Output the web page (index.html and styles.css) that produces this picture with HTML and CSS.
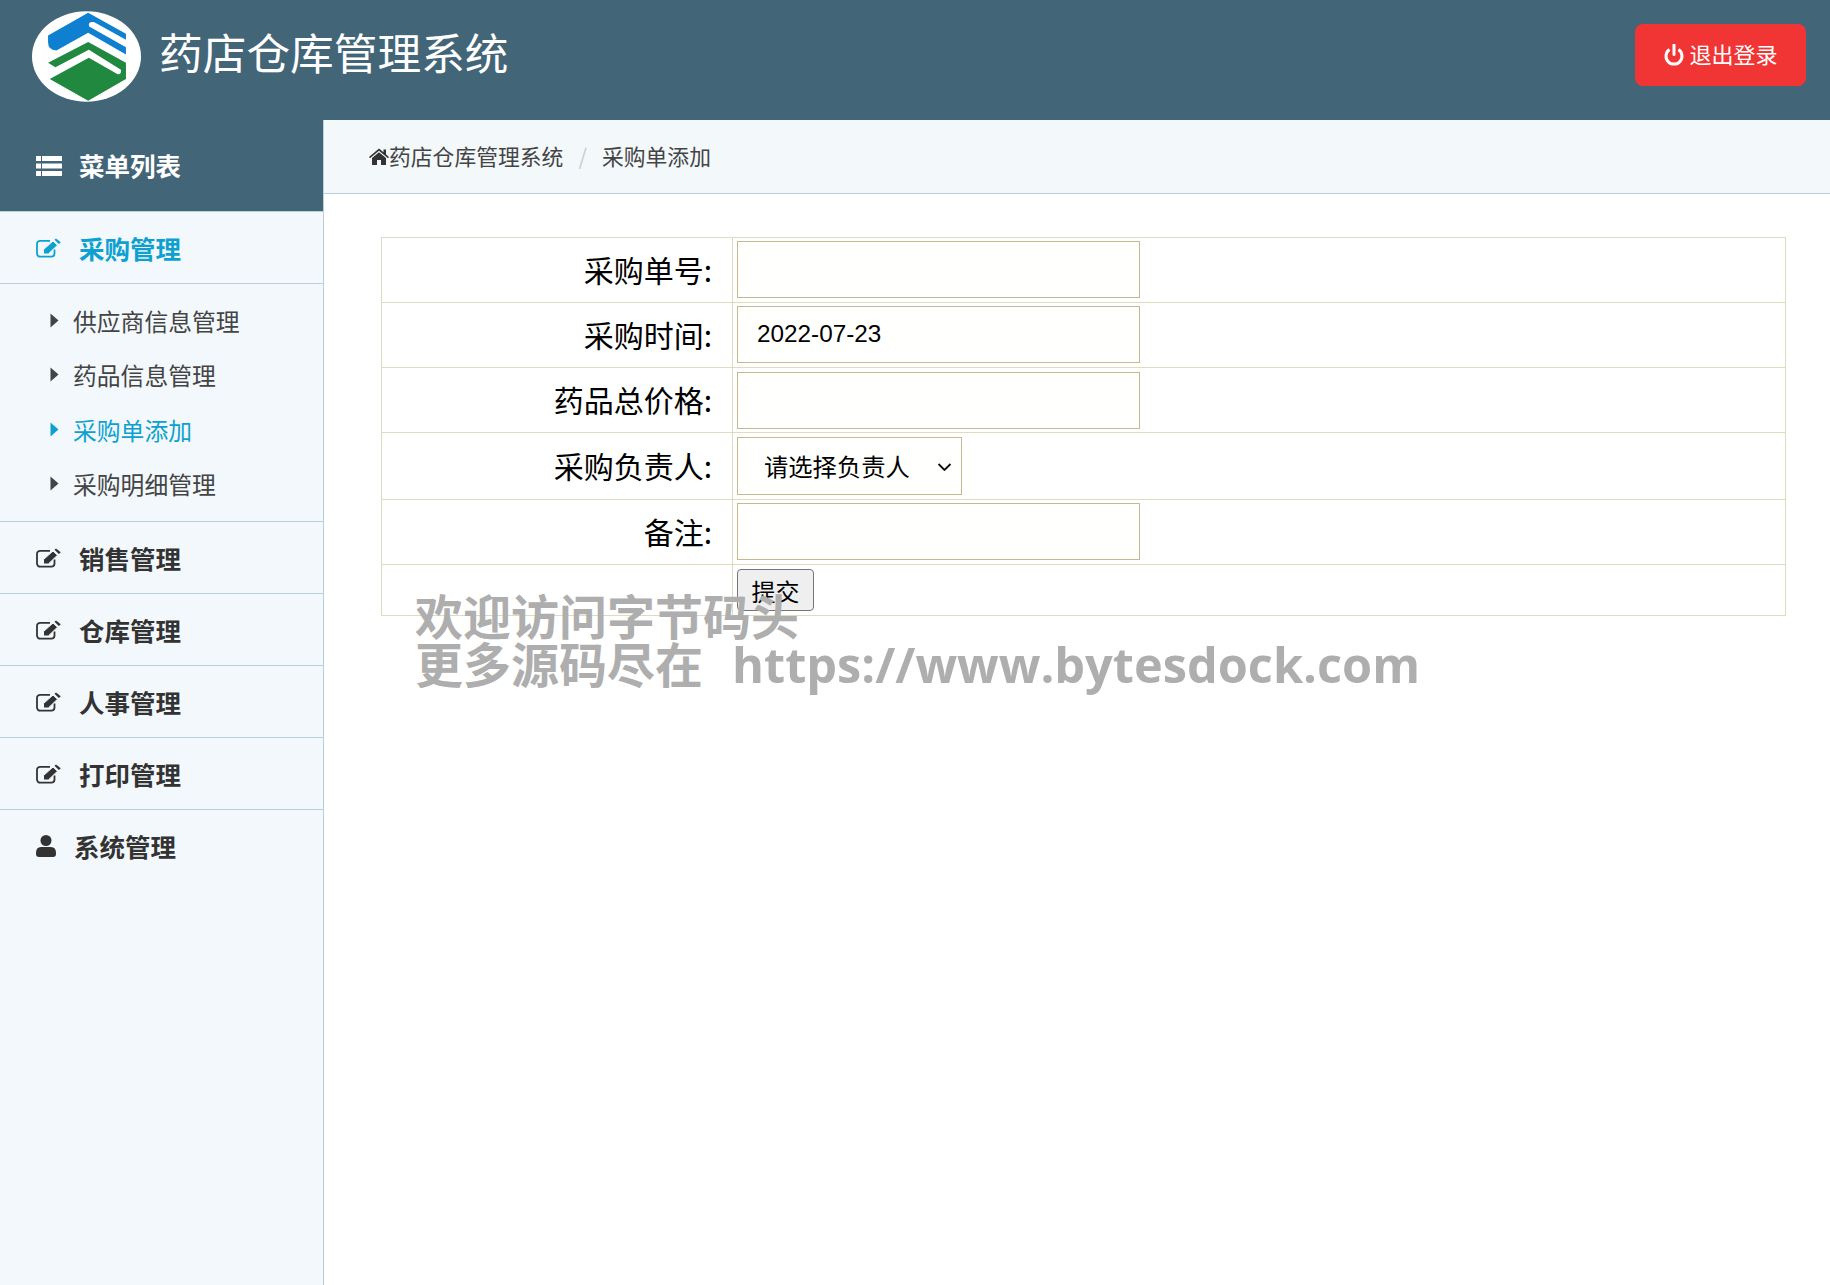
FILE: index.html
```html
<!DOCTYPE html>
<html lang="zh-CN">
<head>
<meta charset="utf-8">
<title>药店仓库管理系统</title>
<link rel="stylesheet" href="styles.css">
</head>
<body>
<svg class="defs" width="0" height="0" aria-hidden="true">
  <symbol id="i-edit" viewBox="0 0 25 20">
    <path d="M18.500 11.500V15.500A3.200 3.200 0 0 1 15.300 18.700H4.200A3.200 3.200 0 0 1 1 15.500V6A3.200 3.200 0 0 1 4.200 2.800H14" fill="none" stroke="currentColor" stroke-width="1.800"/>
    <path d="M7.500 11.500L17 3L21.500 7.200L12.300 16H7.500Z" fill="currentColor" stroke="#f2f8fc" stroke-width="1"/>
    <path d="M18.500 1.800L20 0.400L24.800 4.200L22.800 6Z" fill="currentColor"/>
  </symbol>
  <symbol id="i-caret" viewBox="0 0 9 15">
    <path d="M0.500 0.500L8.500 7.500L0.500 14.500Z" fill="currentColor"/>
  </symbol>
</svg>
<header class="topbar">
  <div class="brand">
    <svg class="logo" viewBox="37 33 326 270" aria-hidden="true">
      <ellipse cx="200" cy="168" rx="163" ry="135" fill="#fff"/>
      <path d="M205 37L318 100V118L222 65Q203 62 208 78L318 140V162L205 97L110 150Q85 150 85 125V105Z" fill="#0f7fd0"/>
      <path d="M205 125L318 187V235L205 300L90 235L207 172L292 220Q305 224 303 208L207 148L107 200L85 187Z" fill="#20883f"/>
    </svg>
    <h1 class="title">药店仓库管理系统</h1>
  </div>
  <button class="logout" type="button">
    <svg class="power" viewBox="0 0 20 22" aria-hidden="true">
      <path d="M5.500 5.500A8 8 0 1 0 14.500 5.500" fill="none" stroke="currentColor" stroke-width="3"/>
      <path d="M10 1V10.500" fill="none" stroke="currentColor" stroke-width="3" stroke-linecap="round"/>
    </svg>
    <span class="logout-text">退出登录</span>
  </button>
</header>
<div class="layout">
  <aside class="sidebar">
    <div class="side-head">
      <svg class="list-icon" viewBox="0 0 26 20" aria-hidden="true">
        <path d="M0 0H5V5H0ZM6 0H26V5H6ZM0 7.500H5V12.500H0ZM6 7.500H26V12.500H6ZM0 15H5V20H0ZM6 15H26V20H6Z" fill="currentColor"/>
      </svg>
      <span>菜单列表</span>
    </div>
    <nav>
      <a class="group active"><svg class="edit"><use href="#i-edit"/></svg><span>采购管理</span></a>
      <ul class="sub">
        <li class="sub-item"><svg class="caret"><use href="#i-caret"/></svg><span>供应商信息管理</span></li>
        <li class="sub-item"><svg class="caret"><use href="#i-caret"/></svg><span>药品信息管理</span></li>
        <li class="sub-item current"><svg class="caret"><use href="#i-caret"/></svg><span>采购单添加</span></li>
        <li class="sub-item"><svg class="caret"><use href="#i-caret"/></svg><span>采购明细管理</span></li>
      </ul>
      <a class="group"><svg class="edit"><use href="#i-edit"/></svg><span>销售管理</span></a>
      <a class="group"><svg class="edit"><use href="#i-edit"/></svg><span>仓库管理</span></a>
      <a class="group"><svg class="edit"><use href="#i-edit"/></svg><span>人事管理</span></a>
      <a class="group"><svg class="edit"><use href="#i-edit"/></svg><span>打印管理</span></a>
      <a class="group plain">
        <svg class="user" viewBox="0 0 20 22" aria-hidden="true">
          <circle cx="10" cy="5.500" r="5.500" fill="currentColor"/>
          <path d="M0 18Q0 12 5 12H15Q20 12 20 18V19Q20 22 17 22H3Q0 22 0 19Z" fill="currentColor"/>
        </svg>
        <span>系统管理</span>
      </a>
    </nav>
  </aside>
  <main class="main">
    <div class="crumbs">
      <svg class="home" viewBox="0 0 20 17" aria-hidden="true">
        <path d="M10 0.500L14.500 4.300V1.500H17V6.500L20 9L19 10.200L10 2.800L1 10.200L0 9Z" fill="currentColor"/>
        <path d="M10 4.300L17 10V17H12V12H8V17H3V10Z" fill="currentColor"/>
      </svg>
      <span>药店仓库管理系统</span>
      <span class="sep">/</span>
      <span>采购单添加</span>
    </div>
    <div class="content">
      <table class="form">
        <tr class="row"><th>采购单号:</th><td><input class="field" type="text"></td></tr>
        <tr class="row"><th>采购时间:</th><td><input class="field" type="text" value="2022-07-23"></td></tr>
        <tr class="row"><th>药品总价格:</th><td><input class="field low" type="text"></td></tr>
        <tr class="row tall"><th>采购负责人:</th><td>
          <div class="picker-wrap">
            <select class="picker"><option>请选择负责人</option></select>
            <svg class="chevron" viewBox="0 0 14 8" aria-hidden="true">
              <path d="M1 1L7 7L13 1" fill="none" stroke="currentColor" stroke-width="1.800"/>
            </svg>
          </div>
        </td></tr>
        <tr class="row"><th>备注:</th><td><input class="field" type="text"></td></tr>
        <tr class="row short"><th></th><td><button class="submit" type="button">提交</button></td></tr>
      </table>
      <div class="watermark">欢迎访问字节码头<br>更多源码尽在<span class="wm-url">https://www.bytesdock.com</span></div>
    </div>
  </main>
</div>
</body>
</html>
```
FILE: styles.css
```css
* { box-sizing: border-box; }
html, body { height: 100%; }
body {
  margin: 0;
  display: flex;
  flex-direction: column;
  font-family: "Noto Sans CJK SC", "Liberation Sans", sans-serif;
  color: #333;
  background: #fff;
  overflow: hidden;
}
.defs { position: absolute; }

.topbar {
  flex: none;
  height: 120px;
  background: #436578;
  display: flex;
  align-items: flex-start;
  justify-content: space-between;
  padding: 11px 24px 0 32px;
}
.brand { display: flex; align-items: center; gap: 18px; }
.logo { width: 109px; height: 91px; display: block; }
.title {
  margin: 0 0 11px;
  font-size: 43.700px;
  line-height: 72px;
  font-weight: 400;
  color: #fff;
}
.logout {
  margin-top: 13px;
  width: 171px;
  height: 62px;
  border: 0;
  border-radius: 8px;
  background: #f13434;
  color: #fff;
  font: 400 22px/1 "Noto Sans CJK SC", sans-serif;
  display: flex;
  align-items: center;
  justify-content: center;
  gap: 5px;
  padding: 0 0 0 1px;
}
.power { width: 20px; height: 22px; }
.logout-text { margin-top: -4px; }

.layout { flex: 1; display: flex; min-height: 0; }

.sidebar {
  flex: none;
  width: 324px;
  background: #f2f8fc;
  border-right: 1px solid #b9cfd9;
}
.side-head {
  height: 92px;
  background: #436578;
  border-bottom: 1px solid #b9cfd9;
  color: #fff;
  font-size: 25.500px;
  font-weight: 700;
  display: flex;
  align-items: center;
  gap: 17px;
  padding: 0 0 3px 36px;
}
.list-icon { width: 26px; height: 20px; margin-top: 3px; }

.group {
  height: 72px;
  display: flex;
  align-items: center;
  gap: 18px;
  padding: 0 0 1px 36px;
  border-bottom: 1px solid #b9cfd9;
  font-size: 25.500px;
  font-weight: 700;
  color: #333;
}
.group.plain { border-bottom: 0; gap: 18px; }
.group.active { color: #0ea1cf; }
.edit { width: 25px; height: 20px; flex: none; margin-top: 1px; }
.user { width: 20px; height: 22px; flex: none; margin-top: 1px; }

.sub {
  list-style: none;
  margin: 0;
  padding: 9px 0 10px;
  height: 238px;
  border-bottom: 1px solid #b9cfd9;
}
.sub-item {
  height: 54.500px;
  display: flex;
  align-items: center;
  gap: 14px;
  padding-left: 50px;
  font-size: 23.800px;
  color: #444;
}
.sub-item.current { color: #0ea1cf; }
.caret { width: 9px; height: 15px; flex: none; }

.main { flex: 1; min-width: 0; display: flex; flex-direction: column; }
.crumbs {
  flex: none;
  height: 74px;
  background: #f3f8fb;
  border-bottom: 1px solid #b9cfd9;
  display: flex;
  align-items: center;
  padding: 0 0 2px 45px;
  font-size: 21.800px;
  color: #444;
}
.home { width: 20px; height: 17px; color: #333; margin-top: 2px; }
.sep { color: #ccc; margin: 0 15px; }

.content { position: relative; flex: 1; padding: 43px 44px 0 57px; }
.form {
  width: 100%;
  border-collapse: collapse;
  table-layout: fixed;
  color: #000;
}
.form th, .form td { border: 1px solid #dfdbbd; padding: 0; }
.form th {
  width: 351px;
  padding: 0 20px 2px 0;
  text-align: right;
  font-size: 30px;
  font-weight: 400;
}
.form td { padding-left: 4px; }
.row { height: 65px; }
.row.tall { height: 67px; }
.row.short { height: 51px; }
.field {
  display: block;
  width: 403px;
  height: 57px;
  margin-bottom: 2px;
  padding: 0 19px;
  border: 1px solid #c4b992;
  background: #fffffd;
  font: 24.300px "Liberation Sans", sans-serif;
  color: #000;
  outline: 0;
}
.field.low { margin: 0; }
.picker-wrap { position: relative; width: 225px; }
.picker {
  display: block;
  appearance: none;
  width: 225px;
  height: 58px;
  padding: 0 0 2px 26px;
  border: 1px solid #c4b992;
  border-radius: 0;
  background: #fffffd;
  font: 24.300px "Noto Sans CJK SC", sans-serif;
  color: #000;
}
.chevron {
  position: absolute;
  right: 10px;
  top: 26px;
  width: 15px;
  height: 8px;
  pointer-events: none;
  color: #111;
}
.submit {
  display: block;
  width: 77px;
  height: 42px;
  padding: 0;
  border: 1px solid #767676;
  border-radius: 4px;
  background: #efefef;
  font: 24px "Noto Sans CJK SC", sans-serif;
  color: #000;
}
.watermark {
  position: absolute;
  left: 91px;
  top: 396px;
  font-family: "Noto Sans CJK SC", sans-serif;
  font-size: 48px;
  line-height: 48px;
  font-weight: 700;
  color: #aeaeae;
  white-space: nowrap;
}
.wm-url {
  margin-left: 29px;
  font-family: "Open Sans", "Noto Sans CJK SC", sans-serif;
  font-size: 48.700px;
}
```
